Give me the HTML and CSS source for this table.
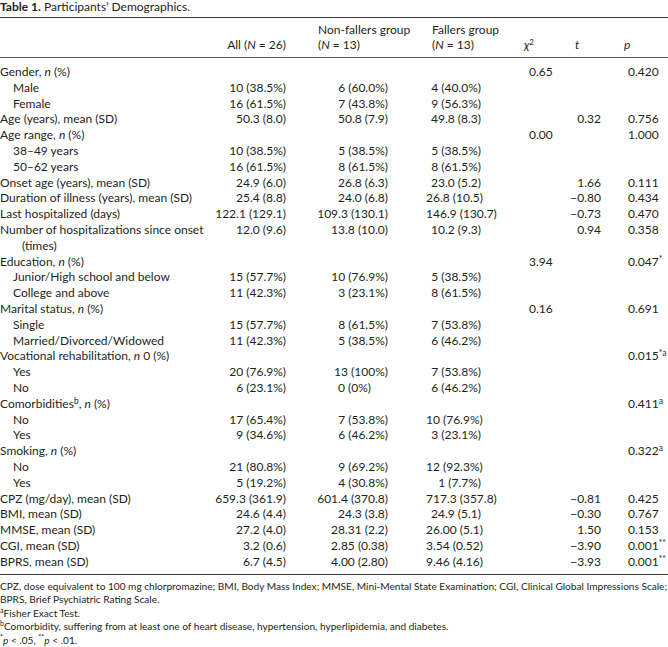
FILE: index.html
```html
<!DOCTYPE html>
<html>
<head>
<meta charset="utf-8">
<link rel="stylesheet" href="styles.css">
</head>
<body>
<div class="page">
  <div class="title"><b>Table 1.</b> Participants’ Demographics.</div>
  <table class="demo">
    <colgroup>
      <col class="c-label"><col class="c-all"><col class="c-non"><col class="c-fal"><col class="c-chi"><col class="c-t"><col class="c-p">
    </colgroup>
    <thead>
      <tr>
        <th class="h-label"></th>
        <th class="h-all">All (<i>N</i> = 26)</th>
        <th class="h-non">Non-fallers group<br>(<i>N</i> = 13)</th>
        <th class="h-fal">Fallers group<br>(<i>N</i> = 13)</th>
        <th class="h-chi"><i>χ</i><sup>2</sup></th>
        <th class="h-t"><i>t</i></th>
        <th class="h-p"><i>p</i></th>
      </tr>
    </thead>
    <tbody>
      <tr class="first"><td>Gender, <i>n</i> (%)</td><td></td><td></td><td></td><td>0.65</td><td></td><td>0.420</td></tr>
      <tr><td class="sub">Male</td><td>10 (38.5%)</td><td>6 (60.0%)</td><td>4 (40.0%)</td><td></td><td></td><td></td></tr>
      <tr><td class="sub">Female</td><td>16 (61.5%)</td><td>7 (43.8%)</td><td>9 (56.3%)</td><td></td><td></td><td></td></tr>
      <tr><td>Age (years), mean (SD)</td><td>50.3 (8.0)</td><td>50.8 (7.9)</td><td>49.8 (8.3)</td><td></td><td>0.32</td><td>0.756</td></tr>
      <tr><td>Age range, <i>n</i> (%)</td><td></td><td></td><td></td><td>0.00</td><td></td><td>1.000</td></tr>
      <tr><td class="sub">38–49 years</td><td>10 (38.5%)</td><td>5 (38.5%)</td><td>5 (38.5%)</td><td></td><td></td><td></td></tr>
      <tr><td class="sub">50–62 years</td><td>16 (61.5%)</td><td>8 (61.5%)</td><td>8 (61.5%)</td><td></td><td></td><td></td></tr>
      <tr><td>Onset age (years), mean (SD)</td><td>24.9 (6.0)</td><td>26.8 (6.3)</td><td>23.0 (5.2)</td><td></td><td>1.66</td><td>0.111</td></tr>
      <tr><td>Duration of illness (years), mean (SD)</td><td>25.4 (8.8)</td><td>24.0 (6.8)</td><td>26.8 (10.5)</td><td></td><td>−0.80</td><td>0.434</td></tr>
      <tr><td>Last hospitalized (days)</td><td>122.1 (129.1)</td><td>109.3 (130.1)</td><td>146.9 (130.7)</td><td></td><td>−0.73</td><td>0.470</td></tr>
      <tr><td>Number of hospitalizations since onset<br><span class="cont">(times)</span></td><td>12.0 (9.6)</td><td>13.8 (10.0)</td><td>10.2 (9.3)</td><td></td><td>0.94</td><td>0.358</td></tr>
      <tr><td>Education, <i>n</i> (%)</td><td></td><td></td><td></td><td>3.94</td><td></td><td>0.047<sup>*</sup></td></tr>
      <tr><td class="sub">Junior/High school and below</td><td>15 (57.7%)</td><td>10 (76.9%)</td><td>5 (38.5%)</td><td></td><td></td><td></td></tr>
      <tr><td class="sub">College and above</td><td>11 (42.3%)</td><td>3 (23.1%)</td><td>8 (61.5%)</td><td></td><td></td><td></td></tr>
      <tr><td>Marital status, <i>n</i> (%)</td><td></td><td></td><td></td><td>0.16</td><td></td><td>0.691</td></tr>
      <tr><td class="sub">Single</td><td>15 (57.7%)</td><td>8 (61.5%)</td><td>7 (53.8%)</td><td></td><td></td><td></td></tr>
      <tr><td class="sub">Married/Divorced/Widowed</td><td>11 (42.3%)</td><td>5 (38.5%)</td><td>6 (46.2%)</td><td></td><td></td><td></td></tr>
      <tr><td>Vocational rehabilitation, <i>n</i> 0 (%)</td><td></td><td></td><td></td><td></td><td></td><td>0.015<sup>*a</sup></td></tr>
      <tr><td class="sub">Yes</td><td>20 (76.9%)</td><td>13 (100%)</td><td>7 (53.8%)</td><td></td><td></td><td></td></tr>
      <tr><td class="sub">No</td><td>6 (23.1%)</td><td class="zero">0 (0%)</td><td>6 (46.2%)</td><td></td><td></td><td></td></tr>
      <tr><td>Comorbidities<sup>b</sup>, <i>n</i> (%)</td><td></td><td></td><td></td><td></td><td></td><td>0.411<sup>a</sup></td></tr>
      <tr><td class="sub">No</td><td>17 (65.4%)</td><td>7 (53.8%)</td><td>10 (76.9%)</td><td></td><td></td><td></td></tr>
      <tr><td class="sub">Yes</td><td>9 (34.6%)</td><td>6 (46.2%)</td><td>3 (23.1%)</td><td></td><td></td><td></td></tr>
      <tr><td>Smoking, <i>n</i> (%)</td><td></td><td></td><td></td><td></td><td></td><td>0.322<sup>a</sup></td></tr>
      <tr><td class="sub">No</td><td>21 (80.8%)</td><td>9 (69.2%)</td><td>12 (92.3%)</td><td></td><td></td><td></td></tr>
      <tr><td class="sub">Yes</td><td>5 (19.2%)</td><td>4 (30.8%)</td><td>1 (7.7%)</td><td></td><td></td><td></td></tr>
      <tr><td>CPZ (mg/day), mean (SD)</td><td>659.3 (361.9)</td><td>601.4 (370.8)</td><td>717.3 (357.8)</td><td></td><td>−0.81</td><td>0.425</td></tr>
      <tr><td>BMI, mean (SD)</td><td>24.6 (4.4)</td><td>24.3 (3.8)</td><td>24.9 (5.1)</td><td></td><td>−0.30</td><td>0.767</td></tr>
      <tr><td>MMSE, mean (SD)</td><td>27.2 (4.0)</td><td>28.31 (2.2)</td><td>26.00 (5.1)</td><td></td><td>1.50</td><td>0.153</td></tr>
      <tr><td>CGI, mean (SD)</td><td>3.2 (0.6)</td><td>2.85 (0.38)</td><td>3.54 (0.52)</td><td></td><td>−3.90</td><td>0.001<sup>**</sup></td></tr>
      <tr class="last"><td>BPRS, mean (SD)</td><td>6.7 (4.5)</td><td>4.00 (2.80)</td><td>9.46 (4.16)</td><td></td><td>−3.93</td><td>0.001<sup>**</sup></td></tr>
    </tbody>
  </table>
  <div class="notes">
    <p>CPZ, dose equivalent to 100 mg chlorpromazine; BMI, Body Mass Index; MMSE, Mini-Mental State Examination; CGI, Clinical Global Impressions Scale; BPRS, Brief Psychiatric Rating Scale.</p>
    <p><sup>a</sup>Fisher Exact Test.</p>
    <p><sup>b</sup>Comorbidity, suffering from at least one of heart disease, hypertension, hyperlipidemia, and diabetes.</p>
    <p><sup>*</sup><i>p</i> &lt; .05, <sup>**</sup><i>p</i> &lt; .01.</p>
  </div>
</div>
</body>
</html>
```
FILE: styles.css
```css
html, body {
  margin: 0;
  padding: 0;
  background: #ffffff;
}
body {
  font-family: Lato, "Open Sans", sans-serif;
  color: #231f20;
  font-size: 12px;
}
.page {
  width: 668px;
}
.title {
  font-size: 12px;
  line-height: 14px;
  height: 16px;
}
.title b {
  font-weight: 700;
}
.demo {
  width: 668px;
  border-collapse: collapse;
  table-layout: fixed;
  border-top: 1.5px solid #3a3a3a;
  border-bottom: 1.5px solid #3a3a3a;
  margin-top: 1px;
}
.c-label { width: 200px; }
.c-all { width: 92px; }
.c-non { width: 134px; }
.c-fal { width: 90px; }
.c-chi { width: 40px; }
.c-t { width: 60px; }
.c-p { width: 52px; }

.demo th {
  font-weight: 400;
  text-align: left;
  vertical-align: bottom;
  line-height: 14.5px;
  padding: 5px 0 5px 0;
  border-bottom: 1px solid #555;
}
.demo th.h-all { text-align: right; padding-right: 6px; }
.demo th.h-non { padding-left: 26px; }
.demo th.h-fal { padding-left: 6px; }
.demo th.h-chi { padding-left: 8px; }
.demo th.h-t { padding-left: 19px; }
.demo th.h-p { padding-left: 8px; }
.demo sup {
  font-size: 8.5px;
  line-height: 0;
  vertical-align: 4px;
}
.demo th sup {
  font-size: 8px;
}
.demo td {
  padding: 0;
  line-height: 15.8px;
  white-space: nowrap;
  vertical-align: top;
}
.demo td:nth-child(2) { text-align: right; padding-right: 6px; }
.demo td:nth-child(3) { text-align: right; padding-right: 38px; }
.demo td:nth-child(4) { text-align: right; padding-right: 35px; }
.demo td:nth-child(5) { text-align: left; padding-left: 13px; }
.demo td:nth-child(6) { text-align: right; padding-right: 15px; }
.demo td:nth-child(7) { text-align: left; padding-left: 12px; }
.demo td.zero { text-align: left; padding-left: 46px; padding-right: 0; }
.demo td.sub { padding-left: 13px; }
.demo td .cont { padding-left: 22px; }
.demo tr.first td { padding-top: 6px; }
.demo tr.last td { padding-bottom: 4px; }
.notes {
  font-size: 10.1px;
  line-height: 13.5px;
  padding-top: 5px;
}
.notes p { margin: 0; }
.notes sup {
  font-size: 7px;
  line-height: 0;
  vertical-align: 4px;
}
```
